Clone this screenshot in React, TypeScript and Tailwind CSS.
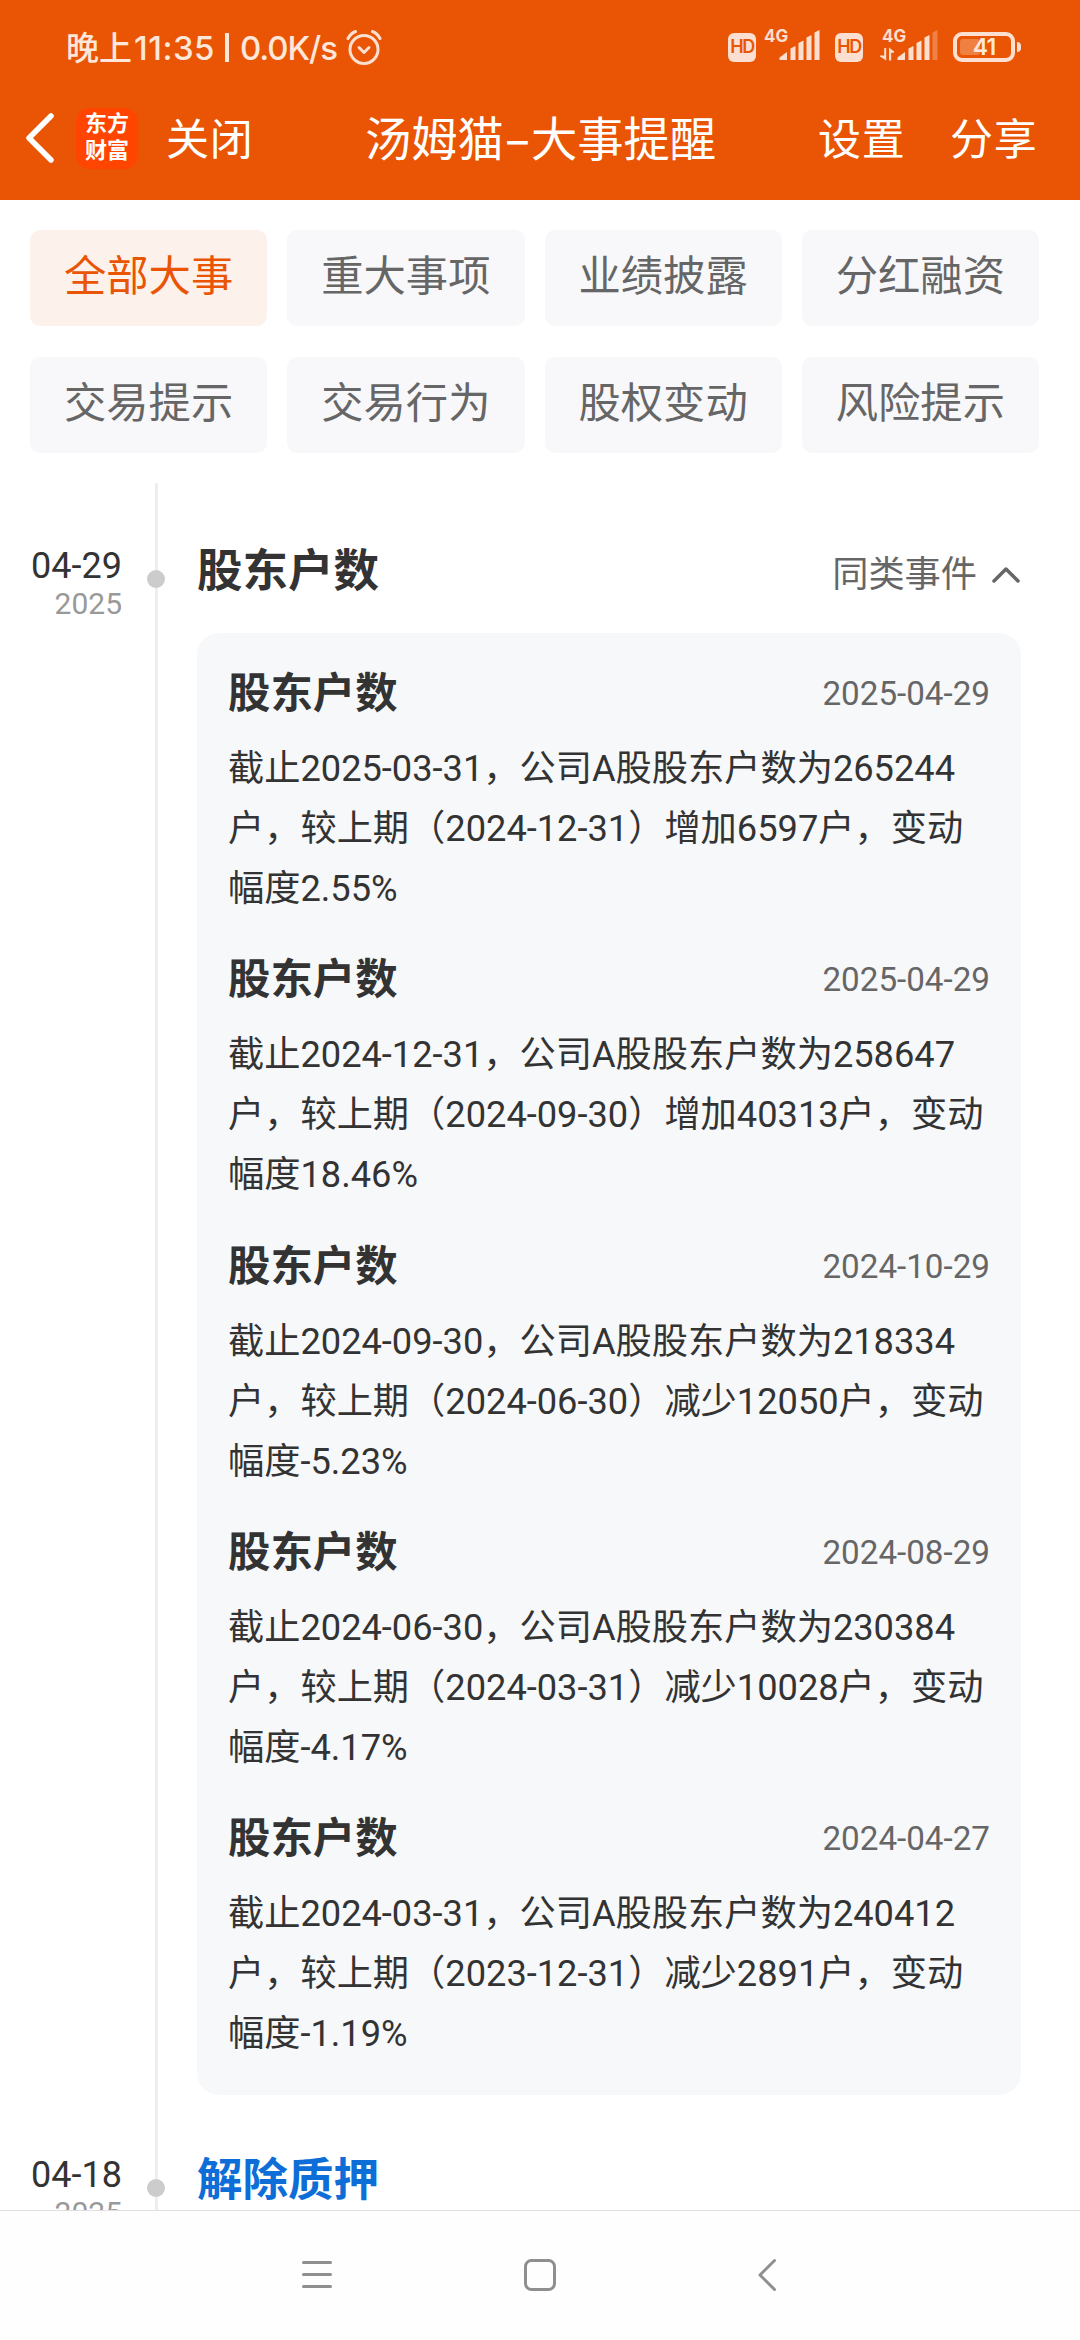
import React from "react";

const LATIN = "font-['Roboto','Noto_Sans_CJK_SC',sans-serif]";
const UI = "font-['Noto_Sans_CJK_SC',sans-serif]";

const tabs = ["全部大事", "重大事项", "业绩披露", "分红融资", "交易提示", "交易行为", "股权变动", "风险提示"];

const events = [
  { date: "2025-04-29", lines: ["截止2025-03-31，公司A股股东户数为265244", "户，较上期（2024-12-31）增加6597户，变动", "幅度2.55%"] },
  { date: "2025-04-29", lines: ["截止2024-12-31，公司A股股东户数为258647", "户，较上期（2024-09-30）增加40313户，变动", "幅度18.46%"] },
  { date: "2024-10-29", lines: ["截止2024-09-30，公司A股股东户数为218334", "户，较上期（2024-06-30）减少12050户，变动", "幅度-5.23%"] },
  { date: "2024-08-29", lines: ["截止2024-06-30，公司A股股东户数为230384", "户，较上期（2024-03-31）减少10028户，变动", "幅度-4.17%"] },
  { date: "2024-04-27", lines: ["截止2024-03-31，公司A股股东户数为240412", "户，较上期（2023-12-31）减少2891户，变动", "幅度-1.19%"] },
];

function HdBadge() {
  return (
    <span className="flex h-[29px] w-[28px] items-center justify-center rounded-[6px] bg-[#fcdfd0] font-['Inter',sans-serif] text-[18px] leading-none font-semibold tracking-[-1.5px] text-[#e95504]">
      HD
    </span>
  );
}

function Signal({ data }: { data?: boolean }) {
  return (
    <span className="relative block h-[34px] w-[58px]">
      <span className="absolute top-0 left-[2px] font-['Inter',sans-serif] text-[17px] leading-[15px] font-bold text-[#fcdfd0]">4G</span>
      <svg className="absolute inset-0" width="58" height="34" viewBox="0 0 58 34" fill="#fcdfd0">
        {data && <path d="M4.200 19h2v12.500L0 27.500v-1h4.200zM9 31.500V18.500l5 4v1.300h-2.800v7.700z" />}
        <path d="M17.500 31v-2.500l7.500-5.500v8z" />
        <path d="M28.500 31V19.500l5-2.500v14z" />
        <path d="M36.500 31V14l5-2.500V31z" />
        <path d="M44.500 31V8.500l5-2.500V31z" />
        <path d="M52.500 31V3.500L57.500 1v30z" opacity={data ? 0.32 : 1} />
      </svg>
    </span>
  );
}

function StatusBar() {
  return (
    <div className={`flex h-[94px] items-center pr-[59px] pl-[66px] text-[#fde6da] ${UI}`}>
      <div className="flex items-center text-[33px] leading-[40px] font-medium whitespace-pre">
        <span className="-mt-[2px] w-[68px]">晚上</span>
        <span className="mt-[1px] w-[82px] font-['Inter',sans-serif] tracking-[0.5px]">11:35</span>
        <span className="mr-[11px] ml-[9px] h-[29px] w-[4px] bg-[#fde6da]" />
        <span className="mt-[1px] w-[99px] font-['Inter',sans-serif] tracking-[-1.1px]">0.0K/s</span>
      </div>
      <svg className="ml-[7px]" width="36" height="36" viewBox="0 0 36 36" fill="none" stroke="#fcdfd0" strokeWidth="3" strokeLinecap="round" strokeLinejoin="round">
        <circle cx="18" cy="20.500" r="14" />
        <path d="M2 9.500Q4.500 4.500 9.500 2.500M34 9.500Q31.500 4.500 26.500 2.500" />
        <path d="M13 18.500l5 5 5-5" />
      </svg>
      <div className="ml-auto flex items-center">
        <HdBadge />
        <span className="-mt-[2px] ml-[6px]"><Signal /></span>
        <span className="ml-[15px]"><HdBadge /></span>
        <span className="-mt-[2px] ml-[17px]"><Signal data /></span>
        <span className="relative ml-[15px] flex h-[30px] w-[62px] items-center justify-center rounded-[9px] border-4 border-[#fcdfd0]">
          <span className="absolute top-[3px] left-[3px] h-[16px] w-[20px] rounded-[3px] bg-[#f07f42]" />
          <span className="relative font-['Inter',sans-serif] text-[23px] leading-none font-semibold tracking-[-1px]">41</span>
        </span>
        <span className="ml-[2px] h-[10px] w-[4px] rounded-r-[4px] bg-[#fcdfd0]" />
      </div>
    </div>
  );
}

function TitleBar() {
  return (
    <div className={`flex h-[106px] items-start text-white ${UI}`}>
      <svg className="mt-[17px] ml-[24px]" width="32" height="54" viewBox="0 0 32 54" fill="none" stroke="white" strokeWidth="5.500" strokeLinecap="round" strokeLinejoin="round">
        <path d="M27 5L5 27l22 22" />
      </svg>
      <div className="mt-[14px] ml-[20px] h-[61px] w-[62px] rounded-[14px] bg-[#ff4500] text-center text-[22px] leading-[27px] font-bold whitespace-pre">
        {"东方\n财富"}
      </div>
      <span className="mt-[17px] ml-[28px] w-[88px] text-[43px] leading-[50px] tracking-[0.7px]">关闭</span>
      <div className="mt-[17px] ml-[111px] flex text-[46.300px] leading-[50px]">
        <span>汤姆猫</span>
        <span className="w-[27px] text-center font-medium">–</span>
        <span>大事提醒</span>
      </div>
      <span className="mt-[17px] ml-[102px] w-[88px] text-[43px] leading-[50px] tracking-[0.7px]">设置</span>
      <span className="mt-[17px] ml-[44px] text-[43px] leading-[50px] tracking-[0.7px]">分享</span>
    </div>
  );
}

function TimelineMarker({ day, year }: { day: string; year: string }) {
  return (
    <div className="flex w-[197px] shrink-0">
      <div className="w-[122px] pt-[62px] text-right">
        <div className="text-[36px] leading-[42px] text-[#333]">{day}</div>
        <div className="mt-[-1px] text-[30px] leading-[36px] text-[#999]">{year}</div>
      </div>
      <div className="relative ml-[33px] w-[3px] bg-[#eee]">
        <span className="absolute top-[87px] -left-[8px] size-[18px] rounded-full bg-[#ccc]" />
      </div>
    </div>
  );
}

export default function App() {
  return (
    <div className={`flex h-[2340px] w-[1080px] flex-col overflow-hidden bg-white ${LATIN}`}>
      <header className="h-[200px] shrink-0 bg-[#e95504]">
        <StatusBar />
        <TitleBar />
      </header>

      <main className="min-h-0 flex-1 overflow-hidden">
        <nav className="grid grid-cols-4 gap-x-[20px] gap-y-[31px] pt-[30px] pr-[41px] pl-[30px]">
          {tabs.map((tab, i) => (
            <div
              key={tab}
              className={`h-[96px] rounded-[10px] pt-[20px] text-center text-[42.300px] leading-[54px] ${
                i === 0 ? "bg-[#fdf1eb] text-[#e95504]" : "bg-[#f8f8fa] text-[#666]"
              }`}
            >
              {tab}
            </div>
          ))}
        </nav>

        <section className="mt-[30px]">
          <article className="flex h-[1609px]">
            <TimelineMarker day="04-29" year="2025" />
            <div className="w-[824px]">
              <div className="flex h-[150px] justify-between pt-[65px]">
                <h2 className="text-[45.500px] leading-[48px] font-bold text-[#333]">股东户数</h2>
                <div className="flex h-[54px] items-center text-[36.200px] leading-[42px] text-[#666]">
                  同类事件
                  <svg className="ml-[14px]" width="30" height="20" viewBox="0 0 30 20" fill="none" stroke="#666" strokeWidth="3.500" strokeLinecap="round" strokeLinejoin="round">
                    <path d="M3 16L15 4l12 12" />
                  </svg>
                </div>
              </div>
              <div className="h-[1462px] rounded-[22px] bg-[#f7f8fa] px-[31px]">
                {events.map((e) => (
                  <div key={e.lines[0]} className="h-[286.25px]">
                    <div className="flex h-[106px] justify-between pt-[39px]">
                      <h3 className="text-[42.400px] leading-[44px] font-bold text-[#333]">股东户数</h3>
                      <span className="pt-[4px] text-[33.200px] leading-[36px] text-[#666]">{e.date}</span>
                    </div>
                    <p className="text-[36.230px] leading-[60px] whitespace-pre text-[#333]">{e.lines.join("\n")}</p>
                  </div>
                ))}
              </div>
            </div>
          </article>
          <article className="flex h-[160px]">
            <TimelineMarker day="04-18" year="2025" />
            <h2 className="pt-[65px] text-[45.500px] leading-[48px] font-bold text-[#0d6ed8]">解除质押</h2>
          </article>
        </section>
      </main>

      <footer className="flex h-[130px] shrink-0 border-t border-[#e0e0e0] bg-[#fefefe] pt-[46px] pl-[300px]">
        <svg width="36" height="36" viewBox="0 0 36 36" stroke="#8f8f8f" strokeWidth="3" strokeLinecap="round">
          <path d="M3.500 5.500h27M3.500 17.500h27M3.500 29.500h27" />
        </svg>
        <svg className="ml-[186px]" width="36" height="36" viewBox="0 0 36 36" fill="none" stroke="#8f8f8f" strokeWidth="3">
          <rect x="3.500" y="3.500" width="29" height="29" rx="6" />
        </svg>
        <svg className="ml-[198px]" width="24" height="36" viewBox="0 0 24 36" fill="none" stroke="#8f8f8f" strokeWidth="3" strokeLinecap="round" strokeLinejoin="round">
          <path d="M18.500 3.500L4 18l14.500 14.500" />
        </svg>
      </footer>
    </div>
  );
}
